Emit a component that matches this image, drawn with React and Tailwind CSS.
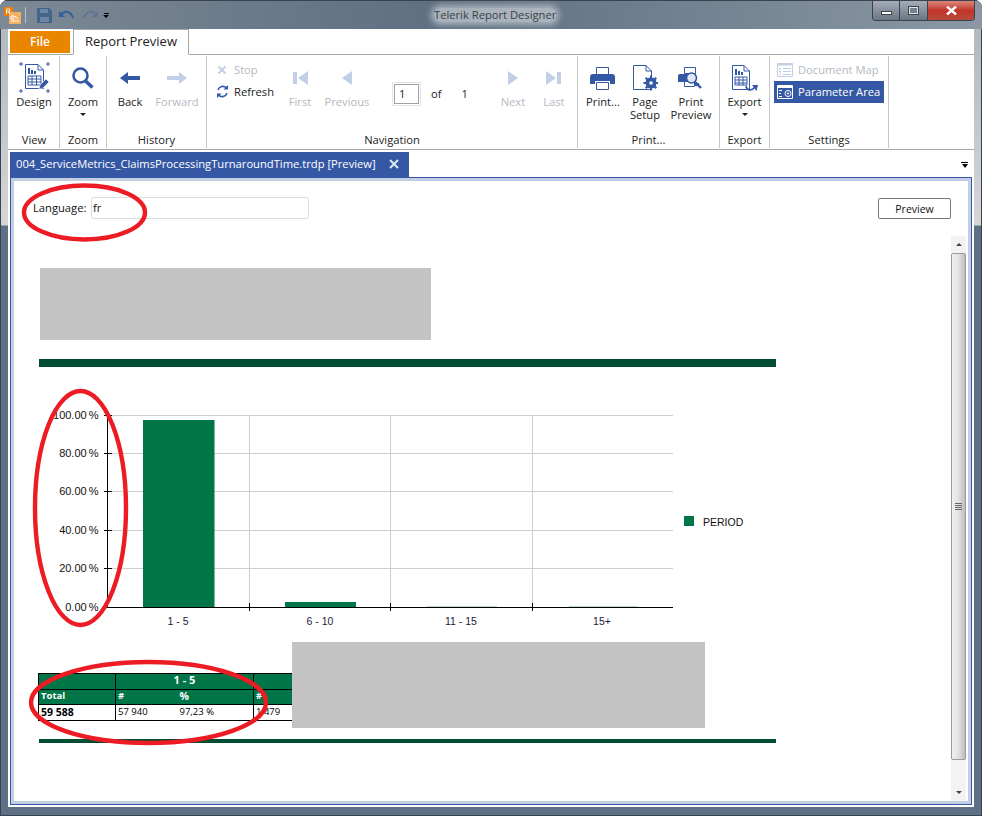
import React from "react";

const BLUE = "#3558a5";
const DIM = "#c3cfe6";

function DocShape({ x = 0, y = 0, w = 20, h = 26 }) {
  return (
    <path
      d={`M${x + 0.5} ${y + 0.5}H${x + w - 6}L${x + w - 0.5} ${y + 6}V${y + h - 0.5}H${x + 0.5}ZM${x + w - 6} ${y + 0.5}V${y + 6}H${x + w - 0.5}`}
      fill="#fff"
      stroke={BLUE}
    />
  );
}

function DesignIcon() {
  return (
    <svg width="34" height="32" viewBox="0 0 34 32">
      <path d="M2 2h4M4 0v4M29 2h4M31 0v4M2 29h4M4 27v4M29 29h4M31 27v4" stroke={BLUE} />
      <DocShape x={8} y={2} w={19} h={25} />
      <path d="M11 6h2v6h-2zM14 8h2v4h-2zM17 9h2v3h-2z" fill={BLUE} />
      <path d="M11 14h13v9H11zM11 17h13M11 20h13M15 14v9M19.500 14v9" fill="none" stroke={BLUE} />
      <path d="M22 27l1-4 6-6 3 3-6 6z" fill={BLUE} stroke="#fff" strokeWidth="0.6" />
    </svg>
  );
}

function ZoomIcon() {
  return (
    <svg width="24" height="24" viewBox="0 0 24 24">
      <circle cx="9.500" cy="9.500" r="7" fill="none" stroke={BLUE} strokeWidth="2.600" />
      <path d="M14.500 15l7 6.500" stroke={BLUE} strokeWidth="3.600" />
    </svg>
  );
}

function ArrowIcon({ dir, color }) {
  return (
    <svg width="20" height="12" viewBox="0 0 20 12">
      <path d={dir === "left" ? "M0 6l8-6v4h12v4H8v4z" : "M20 6l-8-6v4H0v4h12v4z"} fill={color} />
    </svg>
  );
}

function NavIcon({ kind }) {
  const shapes = {
    first: "M0 1h4v12H0zM15 0v14L5 7z",
    prev: "M10 0v14L0 7z",
    next: "M0 0v14l10-7z",
    last: "M0 0v14l10-7zM11 1h4v12h-4z",
  };
  const wide = kind === "first" || kind === "last";
  return (
    <svg width={wide ? 15 : 10} height="14" viewBox={wide ? "0 0 15 14" : "0 0 10 14"}>
      <path d={shapes[kind]} fill={DIM} />
    </svg>
  );
}

function PrintIcon() {
  return (
    <svg width="25" height="23" viewBox="0 0 25 23">
      <path d="M6.500 .5h12v7h-12z" fill="#fff" stroke={BLUE} />
      <path d="M3 7h19a3 3 0 0 1 3 3v7h-5v-3H5v3H0v-7a3 3 0 0 1 3-3z" fill={BLUE} />
      <path d="M6.500 15.500h12v7h-12z" fill="#fff" stroke={BLUE} />
    </svg>
  );
}

function PageSetupIcon() {
  return (
    <svg width="26" height="26" viewBox="0 0 26 26">
      <DocShape x={1} y={0} w={19} h={25} />
      <circle cx="19" cy="18" r="6" fill={BLUE} stroke="#fff" />
      <path d="M19 10.500v15M11.500 18h15M13.700 12.700l10.600 10.600M24.300 12.700L13.700 23.300" stroke={BLUE} strokeWidth="2.200" />
      <circle cx="19" cy="18" r="4.800" fill={BLUE} />
      <circle cx="19" cy="18" r="1.800" fill="#fff" />
    </svg>
  );
}

function PrintPreviewIcon() {
  return (
    <svg width="25" height="23" viewBox="0 0 25 23">
      <path d="M6.500 .5h11v6h-11z" fill="#fff" stroke={BLUE} />
      <path d="M2 7h16v9h3v3H6v-4H0v-6a2 2 0 0 1 2-2z" fill={BLUE} />
      <path d="M6.500 14.500h10v5h-10z" fill="#fff" stroke={BLUE} />
      <circle cx="13.500" cy="11" r="5" fill="#dfe6f3" stroke={BLUE} strokeWidth="1.600" />
      <path d="M17 15l6 6" stroke={BLUE} strokeWidth="2.400" />
    </svg>
  );
}

function ExportIcon() {
  return (
    <svg width="28" height="27" viewBox="0 0 28 27">
      <DocShape x={1} y={0} w={18} h={25} />
      <path d="M4 4h2v6H4zM7 6h2v4H7zM10 7h2v3h-2z" fill={BLUE} />
      <path d="M4 12h12v8H4zM4 15h12M4 18h12M8 12v8M12 12v8" fill="none" stroke={BLUE} />
      <path d="M15 21c1 5 6 5 9 1" fill="none" stroke={BLUE} strokeWidth="1.600" />
      <path d="M21 20h6l-1.500 6z" fill={BLUE} />
    </svg>
  );
}

function DocMapIcon() {
  return (
    <svg width="16" height="14" viewBox="0 0 16 14">
      <path d="M.5 .5h15v13H.5z" fill="#fff" stroke={DIM} />
      <path d="M.5 .5h15v2H.5z" fill={DIM} />
      <path d="M2 5h2v1.500H2zM2 8h2v1.500H2zM2 11h2v1H2zM6 5h8v1H6zM6 8h8v1H6zM6 11h8v1H6z" fill={DIM} />
    </svg>
  );
}

function ParamIcon() {
  return (
    <svg width="16" height="14" viewBox="0 0 16 14">
      <path d="M.5 .5h15v13H.5z" fill={BLUE} stroke="#fff" />
      <path d="M1 1h14v2H1z" fill="#fff" />
      <path d="M2 5h3v1H2zM2 8h2v1H2zM2 11h3v1H2z" fill="#fff" />
      <circle cx="11" cy="8.500" r="3" fill="none" stroke="#fff" />
      <circle cx="11" cy="8.500" r="1" fill="#fff" />
    </svg>
  );
}

function LargeButton({ icon, label, disabled, caret }) {
  return (
    <div className={`flex flex-col items-center leading-[13px] ${disabled ? "text-[#b4b8bf]" : "text-[#222]"}`}>
      <div className="flex h-[32px] items-center justify-center">{icon}</div>
      <div className="mt-[1px] whitespace-pre-line text-center">{label}</div>
      {caret && <div className="mt-[5px] h-0 w-0 border-x-[3px] border-t-[3px] border-x-transparent border-t-[#222]" />}
    </div>
  );
}

function RibbonGroup({ label, className, children }) {
  return (
    <div className={`flex h-[92px] shrink-0 flex-col border-r border-[#c8c8c8] ${className}`}>
      <div className="flex-1">{children}</div>
      <div className="h-[17px] text-center leading-[17px] text-[#222]">{label}</div>
    </div>
  );
}

function Ribbon() {
  return (
    <div className="flex h-[95px] border-b border-[#a8a8a8] pl-[1px] pt-[1px] text-[11.2px]">
      <RibbonGroup label="View" className="w-[51px]">
        <div className="pt-[6px]"><LargeButton icon={<DesignIcon />} label="Design" /></div>
      </RibbonGroup>
      <RibbonGroup label="Zoom" className="w-[47px]">
        <div className="pt-[6px]"><LargeButton icon={<ZoomIcon />} label="Zoom" caret /></div>
      </RibbonGroup>
      <RibbonGroup label="History" className="w-[100px]">
        <div className="flex pt-[6px]">
          <div className="flex w-[46px] justify-center"><LargeButton icon={<ArrowIcon dir="left" color={BLUE} />} label="Back" /></div>
          <div className="flex w-[48px] justify-center"><LargeButton icon={<ArrowIcon dir="right" color={DIM} />} label="Forward" disabled /></div>
        </div>
      </RibbonGroup>
      <RibbonGroup label="Navigation" className="w-[371px]">
        <div className="flex pt-[6px]">
          <div className="ml-[9px] flex w-[69px] flex-col gap-[9px] pt-[1px]">
            <div className="flex items-center gap-[5px] leading-[13px] text-[#b4b8bf]">
              <svg width="13" height="12" viewBox="0 0 13 12"><path d="M2.500 2.500l7 7M9.500 2.500l-7 7" stroke={DIM} strokeWidth="2" /></svg>
              Stop
            </div>
            <div className="flex items-center gap-[5px] leading-[13px] text-[#222]">
              <svg width="13" height="13" viewBox="0 0 13 13">
                <path d="M2 5a5 5 0 0 1 8.500-2M11 8a5 5 0 0 1-8.500 2" fill="none" stroke={BLUE} strokeWidth="1.600" />
                <path d="M12 0v4.500H7.500zM1 13V8.500h4.500z" fill={BLUE} />
              </svg>
              Refresh
            </div>
          </div>
          <div className="flex w-[30px] justify-center"><LargeButton icon={<NavIcon kind="first" />} label="First" disabled /></div>
          <div className="ml-[5px] flex w-[54px] justify-center"><LargeButton icon={<NavIcon kind="prev" />} label="Previous" disabled /></div>
          <div className="ml-[18px] mt-[20px] flex h-[24px] w-[29px] items-center justify-center border border-[#e4e4e4]">
            <div className="h-[20px] w-[25px] border border-[#a0a0a0] pl-[4px] leading-[18px] text-[#222]">1</div>
          </div>
          <div className="ml-[10px] mt-[20px] leading-[24px] text-[#222]">of</div>
          <div className="ml-[20px] mt-[20px] leading-[24px] text-[#222]">1</div>
          <div className="ml-[30px] flex w-[30px] justify-center"><LargeButton icon={<NavIcon kind="next" />} label="Next" disabled /></div>
          <div className="ml-[11px] flex w-[30px] justify-center"><LargeButton icon={<NavIcon kind="last" />} label="Last" disabled /></div>
        </div>
      </RibbonGroup>
      <RibbonGroup label="Print..." className="w-[142px]">
        <div className="flex pl-[6px] pt-[6px]">
          <div className="flex w-[38px] justify-center"><LargeButton icon={<PrintIcon />} label="Print..." /></div>
          <div className="ml-[2px] flex w-[42px] justify-center"><LargeButton icon={<PageSetupIcon />} label={"Page\nSetup"} /></div>
          <div className="ml-[2px] flex w-[46px] justify-center"><LargeButton icon={<PrintPreviewIcon />} label={"Print\nPreview"} /></div>
        </div>
      </RibbonGroup>
      <RibbonGroup label="Export" className="w-[50px]">
        <div className="pt-[6px]"><LargeButton icon={<ExportIcon />} label="Export" caret /></div>
      </RibbonGroup>
      <RibbonGroup label="Settings" className="w-[119px]">
        <div className="flex flex-col whitespace-nowrap px-[4px] pt-[3px] leading-[22px]">
          <div className="flex h-[22px] items-center gap-[5px] px-[3px] text-[#b4b8bf]"><DocMapIcon />Document Map</div>
          <div className="flex h-[22px] items-center gap-[5px] bg-[#3558a5] px-[3px] text-white"><ParamIcon />Parameter Area</div>
        </div>
      </RibbonGroup>
    </div>
  );
}

function TitleBar() {
  return (
    <div className="relative -mx-[8px] flex h-[29px] items-center border-t border-[#39434f] bg-gradient-to-r from-[#7d8995] via-[#5d6f82] via-45% to-[#8b98a4] pl-[4px]">
      <svg width="17" height="18" viewBox="0 0 17 18" className="mt-[1px]">
        <path d="M0 0h9v9H0z" fill="#e8820c" />
        <path d="M5 5h12v12H5z" fill="#f4b060" />
        <path d="M7 9h3v3H7zM11 9l3 3M7 14h8" fill="none" stroke="#fff" />
        <path d="M2.500 7V2h3v2.500h-3M4 4.500L6 7" fill="none" stroke="#fff" strokeWidth="0.8" />
      </svg>
      <div className="ml-[4px] h-[16px] w-px bg-[#b9c2cb]" />
      <svg width="15" height="15" viewBox="0 0 15 15" className="ml-[11px]">
        <path d="M0 0h12l3 3v12H0z" fill="#45648c" />
        <path d="M3 1h8v4H3zM3 9h9v5H3z" fill="#6d86a5" />
      </svg>
      <svg width="15" height="11" viewBox="0 0 15 11" className="ml-[7px]">
        <path d="M2 5c3-5 10-4 12 3" fill="none" stroke="#2f5f9e" strokeWidth="2" />
        <path d="M0 1v6h6z" fill="#2f5f9e" />
      </svg>
      <svg width="15" height="11" viewBox="0 0 15 11" className="ml-[9px]">
        <path d="M13 5C10 0 3 1 1 8" fill="none" stroke="#5f7691" strokeWidth="2" />
        <path d="M15 1v6H9z" fill="#5f7691" />
      </svg>
      <div className="ml-[5px] flex flex-col items-center gap-[1px]">
        <div className="h-[1px] w-[5px] bg-black" />
        <div className="h-0 w-0 border-x-[3px] border-t-[3px] border-x-transparent border-t-black" />
      </div>
      <div className="absolute left-[434px] top-[7px] rounded-[6px] bg-[#c9ced4]/70 text-[11.200px] leading-[14px] text-[#3a3f45] shadow-[0_0_6px_3px_rgba(201,206,212,0.7)]">
        Telerik Report Designer
      </div>
      <div className="absolute left-[872px] top-0 flex h-[20px] w-[103px] overflow-hidden rounded-b-[4px] border border-t-0 border-[#39424d]">
        <div className="flex w-[27px] items-center justify-center border-r border-[#39424d] bg-gradient-to-b from-[#a4acb6] to-[#6b7683]">
          <div className="mt-[4px] h-[4px] w-[11px] border border-[#444] bg-white" />
        </div>
        <div className="flex w-[28px] items-center justify-center border-r border-[#39424d] bg-gradient-to-b from-[#a4acb6] to-[#6b7683]">
          <div className="h-[9px] w-[11px] border border-[#444] bg-[#dfe3e8] p-[1px]"><div className="h-full w-full bg-[#76818e]" /></div>
        </div>
        <div className="flex flex-1 items-center justify-center bg-gradient-to-b from-[#d9857a] via-[#c2342a] to-[#b8483c]">
          <svg width="11" height="9" viewBox="0 0 11 9"><path d="M1 0.500l9 8M10 0.500l-9 8" stroke="#fff" strokeWidth="2.400" /></svg>
        </div>
      </div>
    </div>
  );
}

function Chart() {
  const ticks = [
    ["100.00 %", 415.5],
    ["80.00 %", 453.5],
    ["60.00 %", 491.5],
    ["40.00 %", 530.5],
    ["20.00 %", 568.5],
    ["0.00 %", 607.5],
  ];
  const cats = [["1 - 5", 178], ["6 - 10", 320], ["11 - 15", 461], ["15+", 602]];
  return (
    <svg width="760" height="240" viewBox="14 395 760 240" className="block" style={{ fontFamily: "'Liberation Sans', sans-serif" }}>
      {ticks.slice(0, 5).map(([, y]) => <path key={y} d={`M107 ${y}H673`} stroke="#cfcfcf" />)}
      {[249.5, 390.5, 532.5].map((x) => <path key={x} d={`M${x} 415V607`} stroke="#cfcfcf" />)}
      <rect x="143" y="420" width="71.500" height="187" fill="#007548" />
      <rect x="285" y="602" width="71" height="5" fill="#007548" />
      <rect x="427" y="606" width="70" height="1" fill="#b5dcc8" />
      <rect x="569" y="606" width="69" height="1" fill="#b5dcc8" />
      <path d="M107.500 415V608M103 607.500H673" stroke="#000" />
      {ticks.map(([, y]) => <path key={y} d={`M104 ${y}H112`} stroke="#000" />)}
      {[249.5, 390.5, 532.5].map((x) => <path key={x} d={`M${x} 603V611`} stroke="#000" />)}
      {ticks.map(([t, y]) => (
        <text key={t} x="98.500" y={y + 3.5} textAnchor="end" fontSize="11" wordSpacing="-1" fill="#111">{t}</text>
      ))}
      {cats.map(([t, x]) => (
        <text key={t} x={x} y="625" textAnchor="middle" fontSize="10.500" fill="#1b1b3a">{t}</text>
      ))}
      <rect x="684" y="516" width="10" height="10" fill="#007548" />
      <text x="703" y="525.500" fontSize="10.500" fill="#111">PERIOD</text>
    </svg>
  );
}

function ReportTable() {
  const cell = "border border-black px-[2px] h-[15.500px] leading-[14px] whitespace-nowrap";
  const headCell = "border border-black px-[2px] h-[15.500px] pb-[2px] leading-[12px] whitespace-nowrap";
  return (
    <table className="w-[480px] table-fixed border-collapse font-['Open_Sans',sans-serif] text-[9.500px] text-black">
      <colgroup>
        <col className="w-[77px]" />
        <col className="w-[62px]" />
        <col className="w-[76px]" />
        <col />
      </colgroup>
      <tbody>
        <tr className="bg-[#007548] font-bold text-white">
          <td className={headCell} />
          <td className={`${headCell} text-center text-[11px]`} colSpan={2}>1 - 5</td>
          <td className={headCell} />
        </tr>
        <tr className="bg-[#007548] font-bold text-white">
          <td className={headCell}>Total</td>
          <td className={`${headCell} !border-r-0`}>#</td>
          <td className={`${headCell} !border-l-0 text-[10.500px]`}>%</td>
          <td className={headCell}>#</td>
        </tr>
        <tr>
          <td className={`${cell} text-[10.500px] font-bold`}>59 588</td>
          <td className={`${cell} !border-r-0`}>57 940</td>
          <td className={`${cell} !border-l-0`}>97,23 %</td>
          <td className={cell}>1 479</td>
        </tr>
      </tbody>
    </table>
  );
}

function Scrollbar() {
  return (
    <div className="flex w-[15px] shrink-0 flex-col bg-[#f3f3f3]">
      <div className="flex h-[17px] items-center justify-center">
        <div className="h-0 w-0 border-x-[3px] border-b-[3px] border-x-transparent border-b-[#444]" />
      </div>
      <div className="flex h-[507px] flex-col items-center justify-center gap-[1px] rounded-[2px] border border-[#9a9a9a] bg-gradient-to-r from-[#f0f0f0] via-[#e2e2e2] to-[#bcbcbc]">
        <div className="h-px w-[7px] bg-[#666]" />
        <div className="h-px w-[7px] bg-[#666]" />
        <div className="h-px w-[7px] bg-[#666]" />
        <div className="h-px w-[7px] bg-[#666]" />
      </div>
      <div className="flex-1" />
      <div className="flex h-[17px] items-center justify-center">
        <div className="h-0 w-0 border-x-[3px] border-t-[3px] border-x-transparent border-t-[#444]" />
      </div>
    </div>
  );
}

function Annotations() {
  return (
    <svg width="982" height="816" viewBox="0 0 982 816" className="pointer-events-none absolute left-0 top-0">
      <g fill="none" stroke="#ed1c24" strokeWidth="4.400">
        <ellipse cx="84.500" cy="212.500" rx="60.500" ry="27" />
        <ellipse cx="80.500" cy="508" rx="45.500" ry="117" />
        <ellipse cx="148.500" cy="702.500" rx="117.500" ry="40.500" />
      </g>
    </svg>
  );
}

export default function App() {
  return (
    <div className="relative h-[816px] w-[982px] overflow-hidden rounded-t-[8px] bg-[linear-gradient(to_bottom,#8f98a2_0,#b4b9bf_29px,#d4d6d8_225px,#5e7085_226px,#5e7085_100%)] px-[8px] pb-[9px] font-['Open_Sans',sans-serif] shadow-[inset_0_0_0_1px_#39434f]">
      <TitleBar />
      <div className="flex h-[778px] flex-col bg-white">
        <div className="flex h-[26px] items-end border-b border-[#a8a8a8] pl-[2px]">
          <div className="mb-[1px] flex h-[22px] w-[60px] items-center justify-center bg-[#ea8500] text-[12px] font-semibold text-white">File</div>
          <div className="mb-[-1px] ml-[3px] flex h-[26px] w-[116px] items-center justify-center border border-[#a8a8a8] border-b-white bg-white text-[13px] text-[#222]">Report Preview</div>
        </div>
        <Ribbon />
        <div className="flex h-[27px] items-end pl-[2px] pr-[6px]">
          <div className="flex h-[25px] w-[399px] items-center bg-[#3558a5] pb-[1px] pl-[6px] text-[11.200px] text-white">
            <span className="whitespace-nowrap">004_ServiceMetrics_ClaimsProcessingTurnaroundTime.trdp [Preview]</span>
            <svg width="10" height="10" viewBox="0 0 10 10" className="ml-[13px]"><path d="M1 1l8 8M9 1l-8 8" stroke="#dfe6f3" strokeWidth="2" /></svg>
          </div>
          <div className="mb-[9px] ml-auto flex flex-col items-center gap-[1px]">
            <div className="h-[1px] w-[7px] bg-black" />
            <div className="h-0 w-0 border-x-[3.500px] border-t-[4px] border-x-transparent border-t-black" />
          </div>
        </div>
        <div className="mx-[2px] mb-[2px] flex min-h-0 flex-1 flex-col border border-[#3558a5]">
          <div className="flex min-h-0 flex-1 flex-col border-[3px] border-[#c2cee3] bg-white">
            <div className="flex h-[55px] shrink-0 text-[11.200px] text-[#111]">
              <div className="ml-[19px] mt-[16px] flex h-[22px] items-center">
                <span className="w-[58px]">Language:</span>
                <div className="h-[22px] w-[218px] rounded-[2px] border border-[#dcdcdc] pl-[1px] leading-[19px]">fr</div>
              </div>
              <div className="ml-auto mr-[17px] mt-[17px] flex h-[21px] w-[73px] items-center justify-center rounded-[2px] border border-[#777] bg-white pt-[2px] text-[10.500px]">Preview</div>
            </div>
            <div className="flex min-h-0 flex-1 pr-[2px]">
              <div className="min-w-0 flex-1 overflow-hidden">
                <div className="ml-[26px] mt-[32px] h-[72px] w-[391px] bg-[#c3c3c3]" />
                <div className="ml-[25px] mt-[19px] h-[8px] w-[737px] bg-[#004d31]" />
                <div className="mt-[28px]"><Chart /></div>
                <div className="relative ml-[24px] mt-[38px] h-[66px]">
                  <ReportTable />
                  <div className="absolute left-[254px] top-[-31px] h-[86px] w-[413px] bg-[#c3c3c3]" />
                </div>
                <div className="ml-[25px] h-[4px] w-[737px] bg-[#004d31]" />
              </div>
              <Scrollbar />
            </div>
          </div>
        </div>
      </div>
      <Annotations />
    </div>
  );
}
